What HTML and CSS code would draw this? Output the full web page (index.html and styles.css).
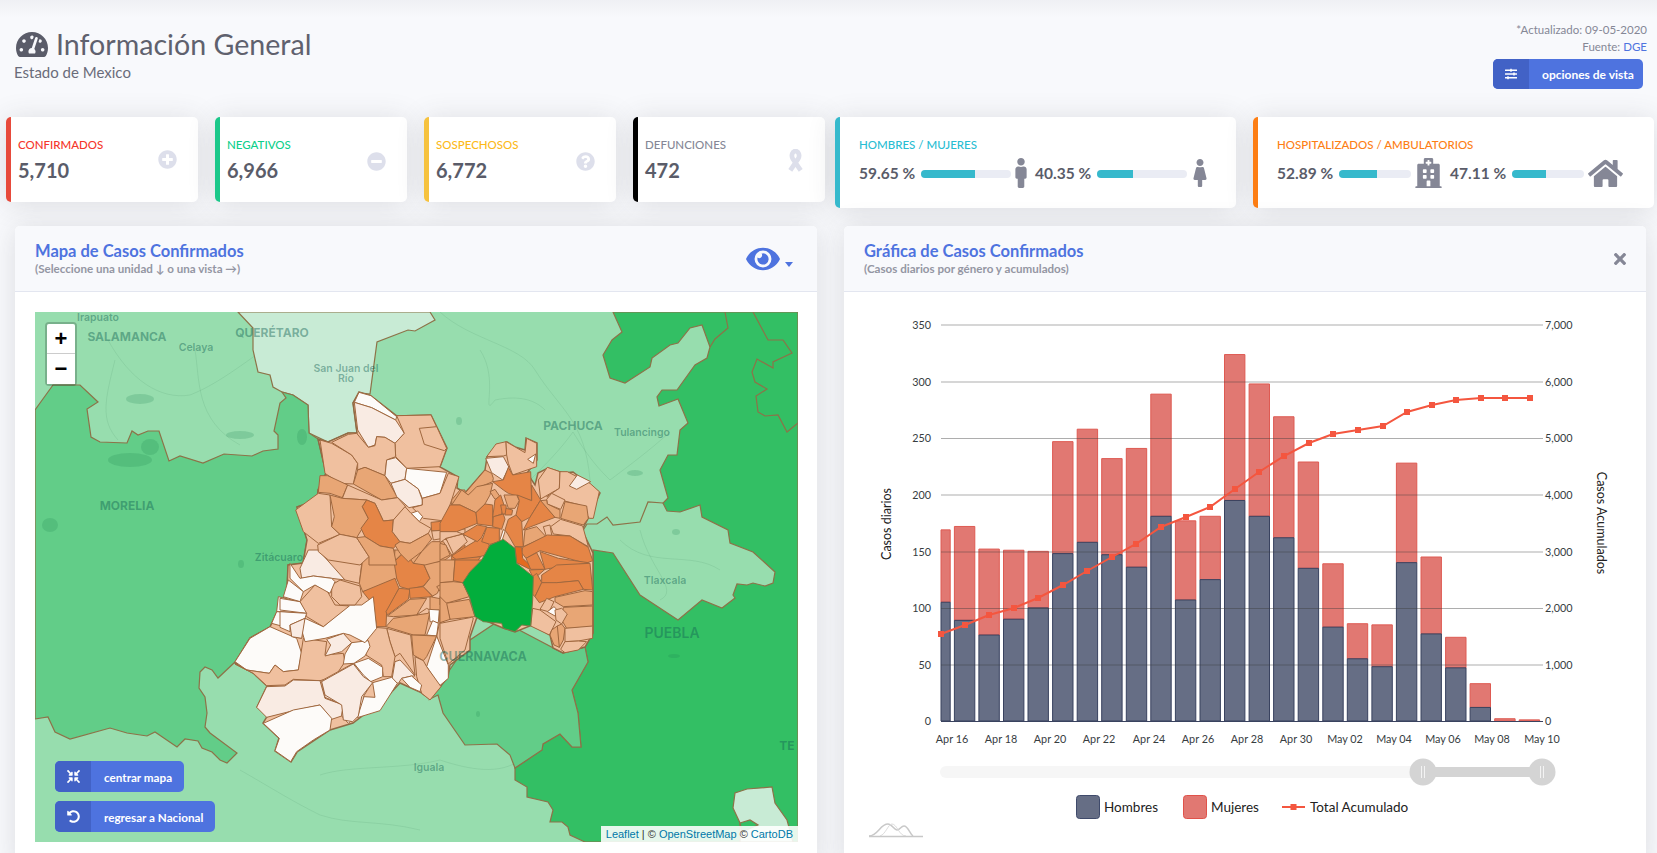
FILE: index.html
```html
<!DOCTYPE html>
<html lang="es">
<head>
<meta charset="utf-8">
<title>Información General</title>
<link rel="stylesheet" href="styles.css">
</head>
<body>
<div class="page">
  <header class="top">
    <div class="heading">
      <h1 class="title"><svg class="ico-gauge" viewBox="0 32 576 448"><path d="M288 32C128.94 32 0 160.94 0 320c0 52.8 14.25 102.26 39.06 144.8 5.61 9.62 16.3 15.2 27.44 15.2h443c11.14 0 21.83-5.58 27.44-15.2C561.75 422.26 576 372.8 576 320c0-159.06-128.94-288-288-288zm0 64c14.71 0 26.58 10.13 30.32 23.65-1.11 2.26-2.64 4.23-3.45 6.67l-9.22 27.67c-5.13 3.49-10.97 6.01-17.64 6.01-17.67 0-32-14.33-32-32S270.33 96 288 96zM96 384c-17.67 0-32-14.33-32-32s14.33-32 32-32 32 14.33 32 32-14.33 32-32 32zm48-160c-17.67 0-32-14.33-32-32s14.33-32 32-32 32 14.33 32 32-14.33 32-32 32zm246.77-72.41l-61.33 184C343.13 347.33 352 364.54 352 384c0 11.72-3.38 22.55-8.88 32H232.88c-5.5-9.45-8.88-20.28-8.88-32 0-33.94 26.5-61.43 59.9-63.59l61.34-184.01c4.17-12.56 17.73-19.45 30.36-15.17 12.57 4.19 19.35 17.79 15.17 30.36zm14.66 57.2l15.52-46.55c3.47-1.29 7.13-2.23 11.05-2.23 17.67 0 32 14.33 32 32s-14.33 32-32 32c-11.38-.01-20.89-6.28-26.57-15.22zM480 384c-17.67 0-32-14.33-32-32s14.33-32 32-32 32 14.33 32 32-14.33 32-32 32z"/></svg>Información General</h1>
      <p class="subtitle">Estado de Mexico</p>
    </div>
    <div class="meta">
      <p class="meta-line">*Actualizado: 09-05-2020</p>
      <p class="meta-line">Fuente: <a class="link" href="#">DGE</a></p>
      <a class="btn btn-top" href="#"><span class="btn-ico"><svg class="ico-btn" viewBox="0 0 512 512"><path d="M496 384H160v-16c0-8.8-7.2-16-16-16h-32c-8.8 0-16 7.2-16 16v16H16c-8.8 0-16 7.2-16 16v32c0 8.8 7.2 16 16 16h80v16c0 8.8 7.2 16 16 16h32c8.8 0 16-7.2 16-16v-16h336c8.8 0 16-7.2 16-16v-32c0-8.8-7.2-16-16-16zm0-160h-80v-16c0-8.8-7.2-16-16-16h-32c-8.8 0-16 7.2-16 16v16H16c-8.8 0-16 7.2-16 16v32c0 8.8 7.2 16 16 16h336v16c0 8.8 7.2 16 16 16h32c8.8 0 16-7.2 16-16v-16h80c8.8 0 16-7.2 16-16v-32c0-8.8-7.2-16-16-16zm0-160H288V48c0-8.8-7.2-16-16-16h-32c-8.8 0-16 7.2-16 16v16H16C7.2 64 0 71.2 0 80v32c0 8.8 7.2 16 16 16h208v16c0 8.8 7.2 16 16 16h32c8.8 0 16-7.2 16-16v-16h208c8.8 0 16-7.2 16-16V80c0-8.8-7.2-16-16-16z"/></svg></span><span class="btn-text">opciones de vista</span></a>
    </div>
  </header>

  <section class="stats">
    <article class="card card-small edge-red">
      <div><p class="label text-red">CONFIRMADOS</p><p class="num">5,710</p></div>
      <svg class="ico-stat" viewBox="0 0 512 512"><path d="M256 8C119 8 8 119 8 256s111 248 248 248 248-111 248-248S393 8 256 8zm144 276c0 6.6-5.4 12-12 12h-92v92c0 6.6-5.4 12-12 12h-56c-6.6 0-12-5.4-12-12v-92h-92c-6.6 0-12-5.4-12-12v-56c0-6.6 5.4-12 12-12h92v-92c0-6.6 5.4-12 12-12h56c6.6 0 12 5.4 12 12v92h92c6.6 0 12 5.4 12 12v56z"/></svg>
    </article>
    <article class="card card-small edge-green">
      <div><p class="label text-green">NEGATIVOS</p><p class="num">6,966</p></div>
      <svg class="ico-stat ico-low" viewBox="0 0 512 512"><path d="M256 8C119 8 8 119 8 256s111 248 248 248 248-111 248-248S393 8 256 8zM124 296c-6.6 0-12-5.4-12-12v-56c0-6.6 5.4-12 12-12h264c6.6 0 12 5.4 12 12v56c0 6.6-5.4 12-12 12H124z"/></svg>
    </article>
    <article class="card card-small edge-yellow">
      <div><p class="label text-yellow">SOSPECHOSOS</p><p class="num">6,772</p></div>
      <svg class="ico-stat ico-low" viewBox="0 0 512 512"><path d="M504 256c0 136.997-111.043 248-248 248S8 392.997 8 256C8 119.083 119.043 8 256 8s248 111.083 248 248zM262.655 90c-54.497 0-89.255 22.957-116.549 63.758-3.536 5.286-2.353 12.415 2.715 16.258l34.699 26.31c5.205 3.947 12.621 3.008 16.665-2.122 17.864-22.658 30.113-35.797 57.303-35.797 20.429 0 45.698 13.148 45.698 32.958 0 14.976-12.363 22.667-32.534 33.976C247.128 238.528 216 254.941 216 296v4c0 6.627 5.373 12 12 12h56c6.627 0 12-5.373 12-12v-1.333c0-28.462 83.186-29.647 83.186-106.667 0-58.002-60.165-102-116.531-102zM256 338c-25.365 0-46 20.635-46 46 0 25.364 20.635 46 46 46s46-20.636 46-46c0-25.365-20.635-46-46-46z"/></svg>
    </article>
    <article class="card card-small edge-black card-last">
      <div><p class="label text-gray">DEFUNCIONES</p><p class="num">472</p></div>
      <svg class="ico-ribbon" viewBox="0 0 18 22"><path d="M4 20.500L11.500 9.500C13.500 6.500 12 2 9 2C6 2 4.500 6.500 6.500 9.500L14 20.500"/></svg>
    </article>
    <article class="card card-wide edge-cyan">
      <p class="label text-cyan">HOMBRES / MUJERES</p>
      <div class="ratio">
        <span class="pct">59.65 %</span>
        <span class="track track-a"><span class="fill" style="width:59.65%"></span></span>
        <svg class="ico-male" viewBox="0 0 192 512"><path d="M96 0c35.346 0 64 28.654 64 64s-28.654 64-64 64-64-28.654-64-64S60.654 0 96 0m48 144h-11.36c-22.711 10.443-49.59 10.894-73.28 0H48c-26.51 0-48 21.49-48 48v136c0 13.255 10.745 24 24 24h16v136c0 13.255 10.745 24 24 24h64c13.255 0 24-10.745 24-24V352h16c13.255 0 24-10.745 24-24V192c0-26.51-21.49-48-48-48z"/></svg>
        <span class="pct">40.35 %</span>
        <span class="track track-a"><span class="fill" style="width:40.35%"></span></span>
        <svg class="ico-female" viewBox="0 0 256 512"><path d="M128 0c35.346 0 64 28.654 64 64s-28.654 64-64 64c-35.346 0-64-28.654-64-64S92.654 0 128 0m119.283 354.179l-48-192A24 24 0 0 0 176 144h-11.36c-22.711 10.443-49.59 10.894-73.28 0H80a24 24 0 0 0-23.283 18.179l-48 192C4.935 369.305 16.383 384 32 384h56v104c0 13.255 10.745 24 24 24h32c13.255 0 24-10.745 24-24V384h56c15.591 0 27.071-14.671 23.283-29.821z"/></svg>
      </div>
    </article>
    <article class="card card-wide edge-orange">
      <p class="label text-orange">HOSPITALIZADOS / AMBULATORIOS</p>
      <div class="ratio">
        <span class="pct">52.89 %</span>
        <span class="track track-b"><span class="fill" style="width:52.89%"></span></span>
        <svg class="ico-hospital" viewBox="0 0 448 512"><path d="M448 492v20H0v-20c0-6.627 5.373-12 12-12h20V120c0-13.255 10.745-24 24-24h88V24c0-13.255 10.745-24 24-24h112c13.255 0 24 10.745 24 24v72h88c13.255 0 24 10.745 24 24v360h20c6.627 0 12 5.373 12 12zM308 192h-40c-6.627 0-12 5.373-12 12v40c0 6.627 5.373 12 12 12h40c6.627 0 12-5.373 12-12v-40c0-6.627-5.373-12-12-12zm-168 64h40c6.627 0 12-5.373 12-12v-40c0-6.627-5.373-12-12-12h-40c-6.627 0-12 5.373-12 12v40c0 6.627 5.373 12 12 12zm104 128h-40c-6.627 0-12 5.373-12 12v84h64v-84c0-6.627-5.373-12-12-12zm64-96h-40c-6.627 0-12 5.373-12 12v40c0 6.627 5.373 12 12 12h40c6.627 0 12-5.373 12-12v-40c0-6.627-5.373-12-12-12zm-116 12c0-6.627-5.373-12-12-12h-40c-6.627 0-12 5.373-12 12v40c0 6.627 5.373 12 12 12h40c6.627 0 12-5.373 12-12v-40zM182 96h26v26a6 6 0 0 0 6 6h20a6 6 0 0 0 6-6V96h26a6 6 0 0 0 6-6V70a6 6 0 0 0-6-6h-26V38a6 6 0 0 0-6-6h-20a6 6 0 0 0-6 6v26h-26a6 6 0 0 0-6 6v20a6 6 0 0 0 6 6z"/></svg>
        <span class="pct">47.11 %</span>
        <span class="track track-b"><span class="fill" style="width:47.11%"></span></span>
        <svg class="ico-home" viewBox="0 0 576 512"><path d="M280.37 148.26L96 300.11V464a16 16 0 0 0 16 16l112.06-.29a16 16 0 0 0 15.92-16V368a16 16 0 0 1 16-16h64a16 16 0 0 1 16 16v95.64a16 16 0 0 0 16 16.05L464 480a16 16 0 0 0 16-16V300L295.67 148.26a12.19 12.19 0 0 0-15.3 0zM571.6 251.47L488 182.56V44.05a12 12 0 0 0-12-12h-56a12 12 0 0 0-12 12v72.61L318.47 43a48 48 0 0 0-61 0L4.34 251.47a12 12 0 0 0-1.6 16.9l25.5 31A12 12 0 0 0 45.15 301l235.22-193.74a12.19 12.19 0 0 1 15.3 0L530.9 301a12 12 0 0 0 16.9-1.6l25.5-31a12 12 0 0 0-1.7-16.93z"/></svg>
      </div>
    </article>
  </section>

  <main class="panels">
    <section class="panel">
      <div class="panel-head">
        <div>
          <h2 class="panel-title">Mapa de Casos Confirmados</h2>
          <p class="panel-note">(Seleccione una unidad ↓ o una vista →)</p>
        </div>
        <div class="eye-menu">
          <svg class="ico-eye" viewBox="0 0 576 512"><path d="M572.52 241.4C518.29 135.59 410.93 64 288 64S57.68 135.64 3.48 241.41a32.35 32.35 0 0 0 0 29.19C57.71 376.41 165.07 448 288 448s230.32-71.64 284.52-177.41a32.35 32.35 0 0 0 0-29.19zM288 400a144 144 0 1 1 144-144 143.93 143.93 0 0 1-144 144zm0-240a95.31 95.31 0 0 0-25.31 3.79 47.85 47.85 0 0 1-66.9 66.9A95.78 95.78 0 1 0 288 160z"/></svg>
          <span class="caret"></span>
        </div>
      </div>
      <div class="panel-body-map">
        <div class="map">
          <svg class="map-svg" viewBox="35 312 763 530">
            <rect class="t-light" x="35" y="312" width="763" height="530"/>
            <g class="roads">
              <path d="M440 312C470 340 520 345 535 370C560 410 585 420 590 480"/>
              <path d="M480 350C500 380 480 420 495 400C520 395 535 400 545 410"/>
              <path d="M573 432C560 450 545 465 530 480M573 432C590 460 600 470 610 480C630 465 650 450 670 432"/>
              <path d="M108 340C130 380 160 400 190 395C215 385 235 370 270 345"/>
              <path d="M195 350C200 380 195 420 240 445M115 360C105 400 100 420 118 440"/>
              <path d="M45 560C90 530 130 520 190 500C220 490 260 480 300 470M130 600C190 570 240 560 280 530"/>
              <path d="M260 320C290 340 330 350 350 380M300 325C320 350 340 345 360 325"/>
              <path d="M240 770C275 790 290 800 320 815C350 825 380 820 420 830M320 775C350 765 400 770 440 760C470 770 500 775 520 760"/>
              <path d="M450 720C480 700 520 700 540 690M500 745C490 720 490 690 500 670M620 620C660 660 700 640 740 650M650 640C660 700 640 760 610 800"/>
              <path d="M620 540C650 570 690 550 720 570M640 530C650 570 680 590 660 600"/>
            </g>
            <polygon class="t-lightest r" points="238,312 253,328 253,350 258,372 270,375 273,387 282,392 293,395 308,405 309,433 328,442 348,433 357,433 353,403 360,393 370,394 377,342 408,330 415,331 435,320 430,312"/>
            <polygon class="t-mid r" points="35,410 53,385 80,385 98,402 87,409 91,437 100,442 127,443 132,431 138,435 148,431 159,431 169,461 180,456 203,463 224,454 252,456 263,451 278,449 278,435 274,431 280,403 286,398 282,392 293,395 308,405 309,433 318,439 326,473 318,490 317,500 297,507 307,540 303,563 288,565 287,590 277,612 270,627 250,638 235,662 218,678 212,670 205,667 200,672 199,688 205,697 207,713 205,727 210,733 237,753 227,763 220,760 212,752 202,748 198,741 185,739 177,747 155,732 147,736 127,733 110,728 70,739 55,732 48,717 35,719"/>
            <polygon class="t-dark r" points="613,312 622,332 612,340 603,355 610,378 625,383 650,367 652,358 670,345 678,343 690,328 702,325 710,347 707,358 695,365 677,390 662,390 657,397 659,406 678,399 688,423 680,430 677,455 668,455 660,470 668,498 663,503 667,511 680,512 700,505 702,517 728,530 730,543 753,552 775,572 773,583 765,586 753,583 747,585 737,584 733,595 735,598 722,608 702,600 678,620 640,595 613,553 593,550 593,633 585,647 588,662 572,690 578,713 581,747 572,747 560,734 543,744 542,750 515,768 515,780 527,787 527,797 548,802 553,810 550,822 562,822 568,827 570,835 585,842 798,842 798,312"/>
            <polygon class="t-mid r" points="438,695 443,713 465,745 497,744 510,755 515,768 542,750 543,744 560,734 572,747 581,747 578,713 572,690 588,662 585,647 563,653 500,620 470,640 430,699"/>
            <polygon class="t-lightest r" points="747,789 772,787 775,803 787,820 793,842 740,842 740,823 733,808 735,793"/>
            <polygon class="t-dark r" points="740,823 750,820 758,825 742,832"/>
            <polyline class="r-line" points="582,532 587,524 597,524 607,517 613,525 640,522 648,502 663,503"/>
            <polyline class="r-line" points="725,312 728,328 715,339 710,347"/>
            <polyline class="r-line" points="753,312 768,340 783,340 792,353 773,362 773,368 757,359 752,372 755,382 767,389 756,396 758,412 765,416 778,415 787,432 798,423"/>
            <g class="blobs">
              <ellipse cx="140" cy="399" rx="14" ry="5"/><ellipse cx="130" cy="460" rx="22" ry="7"/><ellipse cx="150" cy="447" rx="9" ry="8"/>
              <ellipse cx="50" cy="525" rx="8" ry="7"/><ellipse cx="240" cy="435" rx="14" ry="4"/><ellipse cx="302" cy="437" rx="5" ry="8"/>
              <ellipse cx="635" cy="473" rx="8" ry="3"/><ellipse cx="459" cy="421" rx="3" ry="4"/><ellipse cx="676" cy="532" rx="4" ry="3"/>
              <ellipse cx="674" cy="656" rx="6" ry="2"/><ellipse cx="478" cy="714" rx="2" ry="3"/><ellipse cx="241" cy="564" rx="3" ry="4"/>
            </g>
            <g class="labels">
              <text class="lb-s" x="98" y="321">Irapuato</text>
              <text class="lb-b" x="127" y="341">SALAMANCA</text>
              <text class="lb-s" x="196" y="351">Celaya</text>
              <text class="lb-b" x="272" y="337">QUERÉTARO</text>
              <text class="lb-s" x="346" y="372">San Juan del</text>
              <text class="lb-s" x="346" y="382">Río</text>
              <text class="lb-b" x="573" y="430">PACHUCA</text>
              <text class="lb-s" x="642" y="436">Tulancingo</text>
              <text class="lb-b" x="127" y="510">MORELIA</text>
              <text class="lb-s" x="279" y="561">Zitácuaro</text>
              <text class="lb-s" x="665" y="584">Tlaxcala</text>
              <text class="lb-x" x="672" y="638">PUEBLA</text>
              <text class="lb-s" x="429" y="771">Iguala</text>
              <text class="lb-b" x="787" y="750">TE</text>
            </g>
            <polygon class="base" points="359,392 371,396 397,416 431,415 447,448 440,467 458,477 457,488 465,493 485,470 487,457 507,442 515,447 525,450 526,438 537,443 537,460 527,473 535,485 538,473 548,468 563,473 573,472 600,493 590,515 582,530 593,553 593,633 585,647 563,653 553,648 550,635 532,625 515,632 503,628 477,617 470,637 470,650 450,665 448,677 440,687 430,699 420,692 400,683 387,697 353,723 330,730 297,752 291,762 275,751 279,738 263,723 268,715 257,707 267,686 253,673 235,663 250,638 270,627 277,612 287,590 288,565 303,563 307,540 297,507 317,500 318,490 326,473 318,439 328,442 348,433 357,433 353,403"/>
            <g class="mun" transform="translate(20,590) scale(.33333)">
              <polygon class="c0" points="645,215 690,145 750,110 830,145 845,190 835,240 790,245 765,225 748,250 680,240"/>
              <polygon class="c2" points="645,222 680,240 748,250 765,225 790,245 835,240 850,145 920,155 915,195 970,190 975,215 945,260 900,272 820,268 795,285 740,287 700,250"/>
              <polygon class="c0" points="775,20 855,40 860,70 770,65"/>
              <polygon class="c0" points="770,65 855,70 850,85 810,115 755,100"/>
              <polygon class="c1" points="810,115 850,85 845,145 820,140"/>
              <polygon class="c1" points="740,290 795,288 820,270 900,272 915,325 970,345 965,378 935,388 900,345 820,362 740,382 710,352"/>
              <polygon class="c1" points="905,272 1000,220 1055,280 1030,320 1030,360 985,400 965,378 970,345 915,322"/>
              <polygon class="c0" points="730,400 820,360 900,345 935,385 930,420 880,450 830,485 812,515 765,482 778,445"/>
            </g>
            <g class="mun" transform="translate(280,550) scale(.33333)">
              <polygon class="c1" points="85,0 135,0 195,90 155,85 100,78 65,85 60,55"/>
              <polygon class="c2" points="115,0 250,0 238,100 195,90"/>
              <polygon class="c3" points="250,15 262,0 345,0 360,80 320,105 248,125 238,100"/>
              <polygon class="c3" points="345,0 430,0 405,40 385,40 372,5 342,35"/>
              <polygon class="c4" points="342,35 375,5 400,40 430,40 450,85 430,108 388,118 360,110 350,85"/>
              <polygon class="c4" points="248,125 345,85 357,115 320,185 318,230 290,230 280,165"/>
              <polygon class="c4" points="357,115 390,118 385,148 322,195 318,185"/>
              <polygon class="c4" points="388,115 430,110 458,140 390,145"/>
              <polygon class="c3" points="430,40 520,30 525,75 485,100 472,130 458,138 430,110 450,85"/>
              <polygon class="c3" points="470,110 510,90 540,110 540,150 500,150"/>
              <polygon class="c3" points="322,198 390,148 440,145 410,195 340,200"/>
              <polygon class="c3" points="318,230 340,205 410,195 450,185 435,255 400,255"/>
              <polygon class="c3" points="450,140 500,150 540,185 480,220 478,180 450,180"/>
              <polygon class="c2" points="410,195 440,175 450,180 445,190"/>
              <polygon class="c0" points="447,178 478,180 475,218 450,215"/>
              <polygon class="c0" points="440,255 458,212 475,220 470,258"/>
              <polygon class="c2" points="478,220 540,185 540,318 500,342 470,260"/>
              <polygon class="c3" points="395,255 470,258 440,320 430,332 400,315"/>
              <polygon class="c2" points="320,235 392,255 405,375 360,310 345,320 330,275"/>
              <polygon class="c0" points="470,258 505,345 505,385 478,408 440,350"/>
              <polygon class="c2" points="285,232 320,235 330,275 345,320 335,380 310,380 305,345 258,315 260,272"/>
              <polygon class="c2" points="405,320 430,332 440,350 483,410 450,450 425,430 410,380"/>
              <polygon class="c1" points="345,335 360,330 405,378 395,378 365,385 355,400 335,395"/>
              <polygon class="c0" points="365,385 395,378 425,405 420,425 390,412"/>
              <polygon class="c0" points="278,398 335,382 352,400 330,435 300,482 232,503 252,440 285,442"/>
              <polygon class="c0" points="222,340 265,325 308,352 308,380 272,395 250,375"/>
              <polygon class="c1" points="125,395 220,342 250,380 278,398 245,440 235,498 218,515 190,510 185,465 135,435"/>
              <polygon class="c1" points="140,268 190,250 215,278 185,305 135,318 152,285"/>
              <polygon class="c0" points="195,312 215,278 265,272 270,290 255,318 222,340 190,342"/>
              <polygon class="c0" points="75,205 130,230 205,165 245,165 280,140 290,235 255,278 210,255 190,250 135,265 75,275 65,240"/>
              <polygon class="c2" points="60,155 105,105 140,120 165,165 208,168 130,230 80,200"/>
              <polygon class="c2" points="155,105 180,90 240,108 245,140 225,165 180,165 155,140"/>
              <polygon class="c0" points="30,40 60,85 100,78 155,85 165,95 150,130 105,105 70,125 30,85"/>
              <polygon class="c0" points="25,90 70,125 60,155 10,140"/>
              <polygon class="c0" points="0,145 60,155 80,190 0,180"/>
              <polygon class="c0" points="0,185 80,190 75,205 30,225 30,245 0,232"/>
              <polygon class="c1" points="30,225 75,205 65,265 35,260"/>
            </g>
            <g class="mun" transform="translate(285,385) scale(.33333)">
              <polygon class="c0" points="222,22 258,32 335,95 332,105 260,68 208,52"/>
              <polygon class="c1" points="208,52 260,68 332,105 358,145 330,175 300,157 275,155 270,180 250,187 218,135"/>
              <polygon class="c2" points="335,92 438,90 485,190 465,245 365,250 332,215 330,175 358,145"/>
              <polygon class="c2" points="403,130 455,125 485,190 478,197 418,178"/>
              <polygon class="c2" points="105,165 140,175 200,210 218,235 205,297 165,295 120,265"/>
              <polygon class="c2" points="140,172 190,148 215,145 250,187 270,182 275,155 300,157 330,175 332,215 305,225 300,272 240,247 218,255 218,235 200,210"/>
              <polygon class="c3" points="240,247 300,272 338,338 290,345 205,297 218,255"/>
              <polygon class="c1" points="305,225 332,218 365,250 360,283 318,295 300,272"/>
              <polygon class="c0" points="365,250 485,262 465,325 412,340 400,312 360,283"/>
              <polygon class="c1" points="318,295 360,283 400,312 412,345 412,360 372,368 335,335"/>
              <polygon class="c2" points="490,265 522,275 500,345 478,408 415,400 382,368 412,360 412,340 465,325"/>
              <polygon class="c0" points="378,385 398,378 413,395 403,410"/>
              <polygon class="c3" points="105,272 128,272 188,300 172,338 135,325 100,322"/>
              <polygon class="c2" points="188,300 290,345 338,338 362,365 325,405 295,408 270,355 245,345 172,340"/>
              <polygon class="c2" points="32,375 100,325 135,330 140,425 165,448 100,475 55,440"/>
              <polygon class="c3" points="135,330 172,340 245,345 232,365 250,400 215,458 165,448 140,425 148,395"/>
              <polygon class="c4" points="245,345 270,355 295,408 325,405 322,440 345,470 325,490 285,483 240,455 228,430 250,400 232,365"/>
              <polygon class="c2" points="360,365 378,385 403,410 438,430 430,445 375,475 345,470 322,440 325,405"/>
              <polygon class="c4" points="500,365 540,375 540,430 440,438 438,412 478,408"/>
              <polygon class="c3" points="500,345 525,315 540,315 540,365 500,362"/>
              <polygon class="c2" points="165,448 215,458 252,515 225,540 130,525 100,500 98,480"/>
              <polygon class="c3" points="215,458 240,455 285,483 325,490 335,540 252,540 252,515"/>
              <polygon class="c3" points="345,470 375,475 430,445 440,462 410,500 370,530 345,505 330,480"/>
              <polygon class="c2" points="440,438 540,432 540,450 495,470 475,460 445,465"/>
              <polygon class="c3" points="410,500 440,470 475,470 500,510 480,525 420,540 385,535"/>
              <polygon class="c4" points="500,510 540,480 540,515 500,525"/>
            </g>
            <g class="mun" transform="translate(440,430) scale(.33333)">
              <polygon class="c2" points="140,80 168,42 198,35 200,75 190,78"/>
              <polygon class="c2" points="198,35 255,68 260,25 290,40 290,110 218,135 205,100 200,75"/>
              <polygon class="c0" points="263,88 287,72 280,100"/>
              <polygon class="c1" points="137,85 190,80 207,112 188,150 155,128"/>
              <polygon class="c3" points="75,190 135,120 155,130 160,145 158,155 110,175 85,195"/>
              <polygon class="c4" points="158,155 190,150 205,112 218,135 272,125 275,212 205,190 190,180"/>
              <polygon class="c3" points="35,225 65,180 85,195 110,170 158,160 150,195 135,222 108,248 60,225"/>
              <polygon class="c3" points="150,185 165,178 180,200 165,208"/>
              <polygon class="c4" points="0,280 30,225 60,225 108,248 112,280 50,305 0,305"/>
              <polygon class="c4" points="108,248 135,222 158,225 158,288 112,282"/>
              <polygon class="c4" points="158,262 165,210 182,195 192,225 185,252"/>
              <polygon class="c4" points="160,260 190,252 195,268 185,298 158,290"/>
              <polygon class="c4" points="182,225 198,225 200,252 187,252"/>
              <polygon class="c3" points="192,195 230,195 238,212 225,235 205,235"/>
              <polygon class="c4" points="275,165 302,210 270,262 245,275 228,255 238,212 232,195 275,212"/>
              <polygon class="c4" points="198,235 218,240 215,255 195,255"/>
              <polygon class="c4" points="228,255 245,275 250,350 225,350 205,315 195,300 205,268"/>
              <polygon class="c4" points="268,265 302,210 345,262 265,293 250,300"/>
              <polygon class="c2" points="295,150 322,112 360,125 358,175 302,207"/>
              <polygon class="c2" points="360,125 382,125 450,160 478,185 460,265 448,265 420,225 370,212 320,200 358,175"/>
              <polygon class="c1" points="388,168 412,135 452,155 410,178"/>
              <polygon class="c2" points="320,208 335,190 375,210 362,238 322,222"/>
              <polygon class="c3" points="302,212 320,210 322,222 360,240 360,265 345,262"/>
              <polygon class="c3" points="375,215 440,228 445,265 430,285 362,265"/>
              <polygon class="c2" points="362,268 428,288 445,350 390,318 340,312 332,290"/>
              <polygon class="c2" points="310,290 330,285 335,315 320,322"/>
              <polygon class="c3" points="255,300 290,290 318,320 250,350"/>
              <polygon class="c4" points="248,352 322,315 390,318 445,352 458,392 438,400 300,362 258,385 245,368"/>
              <polygon class="c5" points="225,350 245,352 248,385 275,410 270,418 230,398"/>
              <polygon class="c4" points="258,385 290,368 315,418 272,418"/>
              <polygon class="c4" points="300,365 355,385 445,398 380,410 330,415 315,418"/>
              <polygon class="c4" points="268,420 315,418 292,438 278,440"/>
              <polygon class="c4" points="35,378 70,355 125,322 148,345 138,375 100,385 50,390"/>
              <polygon class="c4" points="45,388 122,380 68,455 48,450"/>
              <polygon class="c4" points="68,312 112,285 140,290 125,322 112,335"/>
              <polygon class="c4" points="125,335 140,292 178,295 178,335 150,343"/>
              <polygon class="c2" points="18,325 68,312 82,335 40,372"/>
              <polygon class="c2" points="0,305 50,305 68,312 18,325 0,338"/>
              <polygon class="c3" points="0,340 18,345 30,375 0,390"/>
              <polygon class="c0" points="178,335 190,298 195,305 185,335"/>
            </g>
            <g class="mun" transform="translate(440,560) scale(.33333)">
              <polygon class="c3" points="0,0 45,0 40,65 0,68"/>
              <polygon class="c4" points="45,0 130,0 68,68 40,62"/>
              <polygon class="c3" points="0,68 40,65 68,68 88,110 0,135"/>
              <polygon class="c3" points="18,130 88,118 105,170 30,178"/>
              <polygon class="c3" points="0,110 20,130 30,178 0,188"/>
              <polygon class="c2" points="0,190 95,172 100,175 75,270 25,312 0,235"/>
              <polygon class="c4" points="305,45 350,15 450,10 458,90 430,88 415,62 340,70 305,68"/>
              <polygon class="c4" points="275,52 290,40 305,68 285,110 275,100"/>
              <polygon class="c4" points="285,110 305,68 350,68 415,62 430,88 345,110 298,128"/>
              <polygon class="c3" points="345,112 435,92 458,95 458,135 370,140 345,125"/>
              <polygon class="c3" points="370,142 458,138 458,200 380,205 365,180"/>
              <polygon class="c2" points="278,145 300,150 348,185 328,225 272,198"/>
              <polygon class="c2" points="300,148 320,115 342,125 330,150 325,155"/>
              <polygon class="c0" points="322,155 342,140 352,150 345,168"/>
              <polygon class="c2" points="345,150 365,145 382,162 365,192 348,180"/>
              <polygon class="c3" points="335,210 352,198 365,210 358,262 342,255 330,225"/>
              <polygon class="c3" points="352,198 365,192 375,205 370,240 358,262"/>
              <polygon class="c2" points="375,205 458,198 458,235 415,243 375,245"/>
              <polygon class="c2" points="375,245 415,243 440,245 415,270 375,278 362,268"/>
              <polygon class="cdmx" points="68,68 90,35 125,0 150,-45 190,-62 225,-35 230,10 280,50 278,120 272,198 245,195 225,215 190,205 185,190 130,185 105,170 88,110"/>
            </g>
            <text class="lb-over" x="483" y="661">CUERNAVACA</text>
          </svg>
          <div class="zoom">
            <a class="zoom-btn zoom-in" href="#">+</a>
            <a class="zoom-btn" href="#">−</a>
          </div>
          <div class="map-actions">
            <a class="btn btn-map" href="#"><span class="btn-ico"><svg class="ico-btn" viewBox="0 0 512 512"><path d="M200 288H88c-21.4 0-32.1 25.8-17 41l32.9 31-99.2 99.3c-6.2 6.2-6.2 16.4 0 22.6l25.4 25.4c6.2 6.2 16.4 6.2 22.6 0L152 408l31.1 33c15.1 15.1 40.9 4.4 40.9-17V312c0-13.3-10.7-24-24-24zm112-64h112c21.4 0 32.1-25.9 17-41l-33-31 99.3-99.3c6.2-6.2 6.2-16.4 0-22.6L481.9 4.7c-6.2-6.2-16.4-6.2-22.6 0L360 104l-31.1-33C313.8 55.9 288 66.6 288 88v112c0 13.3 10.7 24 24 24zm96 136l33-31.1c15.1-15.1 4.4-40.9-17-40.9H312c-13.3 0-24 10.7-24 24v112c0 21.4 25.9 32.1 41 17l31-32.9 99.3 99.3c6.2 6.2 16.4 6.2 22.6 0l25.4-25.4c6.2-6.2 6.2-16.4 0-22.6L408 360zM183 71.1L152 104 52.7 4.7c-6.2-6.2-16.4-6.2-22.6 0L4.7 30.1c-6.2 6.2-6.2 16.4 0 22.6L104 152l-33 31.1C55.9 198.2 66.6 224 88 224h112c13.3 0 24-10.7 24-24V88c0-21.3-25.9-32-41-16.9z"/></svg></span><span class="btn-text">centrar mapa</span></a>
            <a class="btn btn-map" href="#"><span class="btn-ico"><svg class="ico-btn" viewBox="0 0 512 512"><path d="M255.545 8c-66.269.119-126.438 26.233-170.86 68.685L48.971 40.971C33.851 25.851 8 36.559 8 57.941V192c0 13.255 10.745 24 24 24h134.059c21.382 0 32.09-25.851 16.971-40.971l-41.75-41.75c30.864-28.899 70.801-44.907 113.23-45.273 92.398-.798 170.283 73.977 169.484 169.442C423.236 348.009 349.816 424 256 424c-41.127 0-79.997-14.678-110.63-41.556-4.743-4.161-11.906-3.908-16.368.553L89.34 422.659c-4.872 4.872-4.631 12.815.482 17.433C133.798 479.813 192.074 504 256 504c136.966 0 247.999-111.033 248-247.998C504.001 119.193 392.354 7.755 255.545 8z"/></svg></span><span class="btn-text">regresar a Nacional</span></a>
          </div>
          <div class="attribution"><a href="#">Leaflet</a> | © <a href="#">OpenStreetMap</a> © <a href="#">CartoDB</a></div>
        </div>
      </div>
    </section>

    <section class="panel">
      <div class="panel-head">
        <div>
          <h2 class="panel-title">Gráfica de Casos Confirmados</h2>
          <p class="panel-note">(Casos diarios por género y acumulados)</p>
        </div>
        <svg class="ico-close" viewBox="0 0 352 512"><path d="M242.72 256l100.07-100.07c12.28-12.28 12.28-32.19 0-44.48l-22.24-22.24c-12.28-12.28-32.19-12.28-44.48 0L176 189.28 75.93 89.21c-12.28-12.28-32.19-12.28-44.48 0L9.21 111.45c-12.28 12.28-12.28 32.19 0 44.48L109.28 256 9.21 356.07c-12.28 12.28-12.28 32.19 0 44.48l22.24 22.24c12.28 12.28 32.2 12.28 44.48 0L176 322.72l100.07 100.07c12.28 12.28 32.2 12.28 44.48 0l22.24-22.24c12.28-12.28 12.28-32.19 0-44.48L242.72 256z"/></svg>
      </div>
      <svg class="chart" viewBox="844 292 802 561">
        <g transform="translate(0,721) scale(1,-1.131)">
          <g class="bar-m">
            <rect x="941" y="105" width="9.2" height="64"/><rect x="954.4" y="89" width="20.4" height="83"/><rect x="978.9" y="76" width="20.4" height="76"/><rect x="1003.5" y="90" width="20.4" height="61"/><rect x="1028" y="100" width="20.4" height="50"/><rect x="1052.6" y="148" width="20.4" height="99"/><rect x="1077.2" y="158" width="20.4" height="100"/><rect x="1101.7" y="147" width="20.4" height="85"/><rect x="1126.3" y="136" width="20.4" height="105"/><rect x="1150.8" y="181" width="20.4" height="108"/><rect x="1175.4" y="107" width="20.4" height="70"/><rect x="1200" y="125" width="20.4" height="56"/><rect x="1224.5" y="195" width="20.4" height="129"/><rect x="1249.1" y="181" width="20.4" height="117"/><rect x="1273.6" y="162" width="20.4" height="107"/><rect x="1298.2" y="135" width="20.4" height="94"/><rect x="1322.8" y="83" width="20.4" height="56"/><rect x="1347.3" y="55" width="20.4" height="31"/><rect x="1371.9" y="48" width="20.4" height="37"/><rect x="1396.4" y="140" width="20.4" height="88"/><rect x="1421" y="77" width="20.4" height="68"/><rect x="1445.6" y="47" width="20.4" height="27"/><rect x="1470.1" y="12" width="20.4" height="21"/><rect x="1494.7" y="0" width="20.4" height="2"/><rect x="1519.2" y="0" width="20.4" height="1"/>
          </g>
          <g class="bar-h">
            <rect x="941" y="0" width="9.2" height="105"/><rect x="954.4" y="0" width="20.4" height="89"/><rect x="978.9" y="0" width="20.4" height="76"/><rect x="1003.5" y="0" width="20.4" height="90"/><rect x="1028" y="0" width="20.4" height="100"/><rect x="1052.6" y="0" width="20.4" height="148"/><rect x="1077.2" y="0" width="20.4" height="158"/><rect x="1101.7" y="0" width="20.4" height="147"/><rect x="1126.3" y="0" width="20.4" height="136"/><rect x="1150.8" y="0" width="20.4" height="181"/><rect x="1175.4" y="0" width="20.4" height="107"/><rect x="1200" y="0" width="20.4" height="125"/><rect x="1224.5" y="0" width="20.4" height="195"/><rect x="1249.1" y="0" width="20.4" height="181"/><rect x="1273.6" y="0" width="20.4" height="162"/><rect x="1298.2" y="0" width="20.4" height="135"/><rect x="1322.8" y="0" width="20.4" height="83"/><rect x="1347.3" y="0" width="20.4" height="55"/><rect x="1371.9" y="0" width="20.4" height="48"/><rect x="1396.4" y="0" width="20.4" height="140"/><rect x="1421" y="0" width="20.4" height="77"/><rect x="1445.6" y="0" width="20.4" height="47"/><rect x="1470.1" y="0" width="20.4" height="12"/>
          </g>
        </g>
        <g class="grid">
          <line x1="941" x2="1543" y1="325" y2="325"/><line x1="941" x2="1543" y1="382" y2="382"/><line x1="941" x2="1543" y1="438.5" y2="438.5"/><line x1="941" x2="1543" y1="495" y2="495"/><line x1="941" x2="1543" y1="552" y2="552"/><line x1="941" x2="1543" y1="608.5" y2="608.5"/><line x1="941" x2="1543" y1="665" y2="665"/><line class="axis" x1="941" x2="1543" y1="721.5" y2="721.5"/>
        </g>
        <polyline class="total" points="941,634 965,625 989,615 1014,608 1038,598 1063,585 1087,571 1112,557 1136,544 1161,527 1186,517 1210,507 1235,489 1259,472 1284,456 1309,443 1333,434 1358,430 1383,426 1407,412 1432,405 1456,400 1481,398 1505,398 1530,398"/>
        <g class="marks">
          <rect x="938" y="631" width="6" height="6"/><rect x="962" y="622" width="6" height="6"/><rect x="986" y="612" width="6" height="6"/><rect x="1011" y="605" width="6" height="6"/><rect x="1035" y="595" width="6" height="6"/><rect x="1060" y="582" width="6" height="6"/><rect x="1084" y="568" width="6" height="6"/><rect x="1109" y="554" width="6" height="6"/><rect x="1133" y="541" width="6" height="6"/><rect x="1158" y="524" width="6" height="6"/><rect x="1183" y="514" width="6" height="6"/><rect x="1207" y="504" width="6" height="6"/><rect x="1232" y="486" width="6" height="6"/><rect x="1256" y="469" width="6" height="6"/><rect x="1281" y="453" width="6" height="6"/><rect x="1306" y="440" width="6" height="6"/><rect x="1330" y="431" width="6" height="6"/><rect x="1355" y="427" width="6" height="6"/><rect x="1380" y="423" width="6" height="6"/><rect x="1404" y="409" width="6" height="6"/><rect x="1429" y="402" width="6" height="6"/><rect x="1453" y="397" width="6" height="6"/><rect x="1478" y="395" width="6" height="6"/><rect x="1502" y="395" width="6" height="6"/><rect x="1527" y="395" width="6" height="6"/>
        </g>
        <g class="tick-left">
          <text x="931" y="329">350</text><text x="931" y="386">300</text><text x="931" y="442">250</text><text x="931" y="499">200</text><text x="931" y="556">150</text><text x="931" y="612">100</text><text x="931" y="669">50</text><text x="931" y="725">0</text>
        </g>
        <g class="tick-right">
          <text x="1545" y="329">7,000</text><text x="1545" y="386">6,000</text><text x="1545" y="442">5,000</text><text x="1545" y="499">4,000</text><text x="1545" y="556">3,000</text><text x="1545" y="612">2,000</text><text x="1545" y="669">1,000</text><text x="1545" y="725">0</text>
        </g>
        <g class="tick-x">
          <text x="952" y="743">Apr 16</text><text x="1001" y="743">Apr 18</text><text x="1050" y="743">Apr 20</text><text x="1099" y="743">Apr 22</text><text x="1149" y="743">Apr 24</text><text x="1198" y="743">Apr 26</text><text x="1247" y="743">Apr 28</text><text x="1296" y="743">Apr 30</text><text x="1345" y="743">May 02</text><text x="1394" y="743">May 04</text><text x="1443" y="743">May 06</text><text x="1492" y="743">May 08</text><text x="1542" y="743">May 10</text>
        </g>
        <text class="axis-title" transform="translate(891,524) rotate(-90)">Casos diarios</text>
        <text class="axis-title" transform="translate(1597,523) rotate(90)">Casos Acumulados</text>
        <rect class="range-track" x="940" y="766" width="480" height="12" rx="6"/>
        <rect class="range-sel" x="1423" y="767" width="119" height="10"/>
        <circle class="range-handle" cx="1423" cy="772" r="13.5"/>
        <circle class="range-handle" cx="1542" cy="772" r="13.5"/>
        <g class="range-grip">
          <line x1="1421.5" x2="1421.5" y1="766" y2="778"/><line x1="1424.5" x2="1424.5" y1="766" y2="778"/><line x1="1540.5" x2="1540.5" y1="766" y2="778"/><line x1="1543.5" x2="1543.5" y1="766" y2="778"/>
        </g>
        <rect class="sw-h" x="1076.5" y="795.5" width="23" height="23" rx="3"/>
        <text class="legend" x="1104" y="812">Hombres</text>
        <rect class="sw-m" x="1183.5" y="795.5" width="23" height="23" rx="3"/>
        <text class="legend" x="1211" y="812">Mujeres</text>
        <line class="total" x1="1282" x2="1305" y1="807" y2="807"/>
        <rect class="mark-one" x="1290.5" y="804" width="6" height="6"/>
        <text class="legend" x="1310" y="812">Total Acumulado</text>
        <path class="brand" d="M869 836C878 836 880 824 888 824C892 824 894 830 897 830C900 830 901 826 904 826C908 826 910 834 913 836"/>
        <path class="brand-soft" d="M880 836C886 834 888 824 892 824C897 824 899 836 906 836"/>
        <line class="brand" x1="869" x2="923" y1="836.5" y2="836.5"/>
      </svg>
    </section>
  </main>
</div>
</body>
</html>
```

FILE: styles.css
```css
* { box-sizing: border-box; }
html, body { margin: 0; height: 100%; }
body { font-family: "Lato", "Open Sans", sans-serif; color: #5a5c69; background: #f8f9fc; overflow: hidden; }
p, h1, h2 { margin: 0; }
a { text-decoration: none; }

.page { height: 853px; overflow: hidden; background: linear-gradient(#eff0f4 0, #f8f9fc 18px); }

/* header */
.top { height: 117px; display: flex; justify-content: space-between; padding: 21px 10px 0 14px; }
.heading { padding-top: 9px; }
.title { display: flex; align-items: center; gap: 8px; font-size: 28.6px; line-height: 28px; font-weight: 400; color: #5f616e; padding-left: 2px; height: 28px; }
.ico-gauge { width: 32px; height: 25px; fill: #5a5c69; }
.subtitle { font-size: 15px; line-height: 18px; color: #6a6c7a; margin-top: 5px; }
.meta { display: flex; flex-direction: column; align-items: flex-end; }
.meta-line { font-size: 11.5px; line-height: 17px; color: #858796; }
.link { color: #4e73df; }
.btn { display: inline-flex; align-items: stretch; background: #4e73df; color: #fff; border-radius: 5px; overflow: hidden; font-weight: 700; white-space: nowrap; }
.btn-ico { width: 36px; flex: none; display: flex; align-items: center; justify-content: center; background: #4262c6; }
.ico-btn { width: 12px; height: 12px; fill: #fff; }
.btn-text { display: flex; align-items: center; padding: 0 12px 0 13px; font-size: 12px; }
.btn-top { height: 30px; width: 150px; margin: 4px 4px 0 0; }

/* stat cards */
.stats { display: flex; align-items: flex-start; gap: 17px; padding-left: 6px; }
.card { background: #fff; border-radius: 5px; border-left: 5px solid; box-shadow: 0 2px 28px rgba(58,59,69,.15); }
.card-small { width: 192px; height: 85px; padding: 21px 21px 0 7px; display: flex; justify-content: space-between; }
.card-wide { width: 401px; height: 91px; padding: 21px 0 0 19px; }
.card-last { margin-right: -7px; padding-right: 20px; }
.edge-red { border-color: #e74a3b; }
.edge-green { border-color: #1cc88a; }
.edge-yellow { border-color: #f6c23e; }
.edge-black { border-color: #000; }
.edge-cyan { border-color: #36b9cc; }
.edge-orange { border-color: #fd7e14; }
.label { font-size: 11.5px; line-height: 14px; font-weight: 500; white-space: nowrap; }
.text-red { color: #f5362b; }
.text-green { color: #0ed08a; }
.text-yellow { color: #fcb919; }
.text-gray { color: #858796; }
.text-cyan { color: #29bdd2; }
.text-orange { color: #fd7e14; }
.num { font-size: 20px; line-height: 24px; font-weight: 700; color: #5a5c69; margin-top: 6px; }
.ico-stat { width: 19px; height: 19px; fill: #dddfeb; margin-top: 12px; }
.ico-low { margin-top: 14px; }
.ico-ribbon { width: 19px; height: 23px; fill: none; stroke: #dddfeb; stroke-width: 4.5; margin-top: 11px; }

.ratio { display: flex; align-items: center; height: 30px; margin-top: 6px; }
.pct { width: 59px; font-size: 15.5px; font-weight: 700; color: #5a5c69; white-space: nowrap; }
.track { display: block; height: 8px; background: #eaecf4; border-radius: 4px; overflow: hidden; margin: 1px 4px 0 3px; }
.track-a { width: 90px; }
.track-b { width: 72px; }
.fill { display: block; height: 100%; background: #36b9cc; }
.ico-male { width: 12px; height: 30px; fill: #858796; margin-right: 8px; }
.ico-female { width: 14px; height: 30px; fill: #858796; margin-left: 2px; }
.ico-hospital { width: 27px; height: 30px; fill: #858796; margin-right: 8px; }
.ico-home { width: 35px; height: 31px; fill: #858796; }

/* panels */
.panels { display: flex; gap: 27px; padding: 18px 0 0 15px; }
.panel { width: 802px; height: 640px; background: #fff; border-radius: 5px; overflow: hidden; box-shadow: 0 2px 28px rgba(58,59,69,.15); }
.panel-head { height: 66px; display: flex; justify-content: space-between; align-items: center; background: #f8f9fc; border-bottom: 1px solid #e3e6f0; padding: 0 20px; }
.panel-title { font-size: 16.5px; line-height: 20px; font-weight: 700; color: #4e73df; }
.panel-note { font-size: 11.6px; line-height: 14px; font-weight: 700; color: #9496a3; margin-top: 1px; }
.eye-menu { display: flex; align-items: center; margin-right: 4px; }
.ico-eye { width: 34px; height: 30px; fill: #4e73df; }
.caret { width: 0; height: 0; border-left: 4px solid transparent; border-right: 4px solid transparent; border-top: 5px solid #4e73df; margin: 12px 0 0 5px; }
.ico-close { width: 12px; height: 18px; fill: #858796; }

/* map */
.panel-body-map { padding: 20px 19px 20px 20px; }
.map { position: relative; width: 763px; height: 530px; overflow: hidden; }
.map-svg { display: block; width: 763px; height: 530px; }
.t-light { fill: #97ddae; }
.t-lightest { fill: #c8ebd5; }
.t-mid { fill: #62cd88; }
.t-dark { fill: #33bf64; }
.r { stroke: #8d7248; stroke-width: 1.2; }
.r-line { fill: none; stroke: #8d7248; stroke-width: 1.2; }
.roads path { fill: none; stroke: rgba(20,90,50,.09); stroke-width: 1; }
.blobs ellipse { fill: rgba(30,130,80,.2); }
.labels text, .lb-over { text-anchor: middle; font-family: "Inter", "Open Sans", sans-serif; fill: rgba(20,100,85,.45); }
.lb-s { font-size: 10.5px; font-weight: 600; }
.lb-b { font-size: 12px; font-weight: 700; }
.lb-x { font-size: 14px; font-weight: 600; }
.lb-over { font-size: 12.5px; font-weight: 700; }
.base { fill: #f0c09f; stroke: #8f6a45; stroke-width: 1.5; }
.mun polygon { stroke: #a0683f; stroke-width: 1; vector-effect: non-scaling-stroke; }
.c0 { fill: #fdfbf9; }
.c1 { fill: #f9ebe3; }
.c2 { fill: #f0c09f; }
.c3 { fill: #e8a675; }
.c4 { fill: #e58546; }
.c5 { fill: #e56a1f; }
.mun .cdmx { fill: #02ae3c; stroke: #7d7a45; }

.zoom { position: absolute; left: 10px; top: 10px; width: 32px; border: 2px solid rgba(0,0,0,.2); border-radius: 4px; background-clip: padding-box; }
.zoom-btn { display: block; height: 30px; text-align: center; background: #fff; color: #000; font: 700 22px/29px "Liberation Sans", sans-serif; }
.zoom-in { border-bottom: 1px solid #ccc; border-radius: 2px 2px 0 0; }
.map-actions { position: absolute; left: 20px; top: 449px; display: flex; flex-direction: column; align-items: flex-start; gap: 9px; }
.btn-map { height: 31px; }
.btn-map .btn-text { padding: 0 12px 0 13px; font-size: 11.7px; }
.btn-map .ico-btn { width: 13px; height: 13px; }
.attribution { position: absolute; right: 0; bottom: 0; height: 16px; padding: 0 5px; background: rgba(255,255,255,.88); font: 11px/16px "Liberation Sans", sans-serif; color: #333; white-space: nowrap; }
.attribution a { color: #0078a8; }

/* chart */
.chart { display: block; width: 802px; height: 561px; }
.bar-m rect { fill: #e17872; stroke: #de5a52; stroke-width: 1; vector-effect: non-scaling-stroke; }
.bar-h rect { fill: #666e85; stroke: #39425f; stroke-width: 1; vector-effect: non-scaling-stroke; }
.grid line { stroke: rgba(60,60,60,.42); stroke-width: 1; }
.grid .axis { stroke: #39425f; }
.total { fill: none; stroke: #f4563f; stroke-width: 2; }
.marks rect, .mark-one { fill: #f4563f; }
.tick-left text, .tick-right text, .tick-x text { font-size: 10.8px; fill: #373d3f; }
.tick-left text { text-anchor: end; }
.tick-x text { text-anchor: middle; }
.axis-title { font-size: 12.5px; fill: #222; text-anchor: middle; }
.range-track { fill: #f6f6f6; }
.range-sel { fill: #d4d4d4; }
.range-handle { fill: #d4d4d4; }
.range-grip line { stroke: #f3f3f3; stroke-width: 1; }
.sw-h { fill: #666e85; stroke: #3f4a6b; stroke-width: 1; }
.sw-m { fill: #e17872; stroke: #e0524a; stroke-width: 1; }
.legend { font-size: 13.5px; fill: #222; }
.brand { fill: none; stroke: #c8c8c8; stroke-width: 1.5; }
.brand-soft { fill: none; stroke: #dcdcdc; stroke-width: 1; }
```
